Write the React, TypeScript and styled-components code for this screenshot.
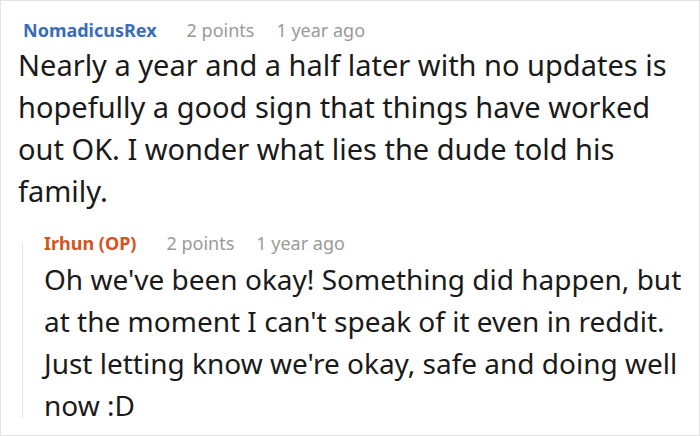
import React, { FunctionComponent } from 'react';
import styled, { createGlobalStyle } from 'styled-components';

/*
 * Styles
 */
const GlobalStyle = createGlobalStyle`
  html, body {
    margin: 0;
    padding: 0;
    background: #ffffff;
  }
  body {
    font-family: "Noto Sans", "Open Sans", sans-serif;
    color: #1a1a1a;
  }
`;

const Frame = styled.div`
  box-sizing: border-box;
  width: 700px;
  height: 436px;
  border: 1px solid #e3e3e3;
  padding: 16px 10px 0 17px;
  overflow: hidden;
`;

const CommentBlock = styled.div<{ $nested?: boolean }>`
  position: relative;
  display: flex;
  flex-direction: column;
  ${(p) => p.$nested && `
    margin: 18px 0 0 4px;
    padding-left: 22px;

    &::before {
      content: '';
      position: absolute;
      left: 0;
      top: 12px;
      bottom: 8px;
      border-left: 1px solid #e4e4e4;
    }
  `}
`;

const Header = styled.div<{ $indent: number }>`
  display: flex;
  align-items: baseline;
  gap: 22px;
  padding-left: ${(p) => p.$indent}px;
  font-size: 18px;
  line-height: 26px;
`;

const Author = styled.span<{ $op?: boolean }>`
  font-weight: 700;
  margin-right: 8px;
  color: ${(p) => (p.$op ? '#d4541f' : '#3a6cbc')};
`;

const Meta = styled.span`
  color: #9a9a9a;
`;

const Body = styled.p<{ $size: number; $maxWidth?: number }>`
  margin: ${(p) => (p.$size > 28 ? 1 : 2)}px 0 0;
  font-size: ${(p) => p.$size}px;
  line-height: 42px;
  max-width: ${(p) => (p.$maxWidth ? `${p.$maxWidth}px` : 'none')};
`;

/*
 * Components
 */
type CommentProps = {
  author: string;
  op?: boolean;
  points: number;
  age: string;
  text: string;
  nested?: boolean;
  maxWidth?: number;
};

const Comment: FunctionComponent<React.PropsWithChildren<CommentProps>> = (props) => {
  const { author, op, points, age, text, nested, maxWidth, children } = props;
  return (
    <CommentBlock $nested={nested}>
      <Header $indent={nested ? 0 : 5}>
        <Author $op={op}>{author}</Author>
        <Meta>{points} points</Meta>
        <Meta>{age}</Meta>
      </Header>
      <Body $size={nested ? 28 : 29} $maxWidth={maxWidth}>{text}</Body>
      {children}
    </CommentBlock>
  );
};

export default function App() {
  return (
    <>
      <GlobalStyle />
      <Frame>
        <Comment
          author="NomadicusRex"
          points={2}
          age="1 year ago"
          maxWidth={655}
          text="Nearly a year and a half later with no updates is hopefully a good sign that things have worked out OK. I wonder what lies the dude told his family."
        >
          <Comment
            nested
            op
            author="Irhun (OP)"
            points={2}
            age="1 year ago"
            text="Oh we've been okay! Something did happen, but at the moment I can't speak of it even in reddit. Just letting know we're okay, safe and doing well now :D"
          />
        </Comment>
      </Frame>
    </>
  );
}
